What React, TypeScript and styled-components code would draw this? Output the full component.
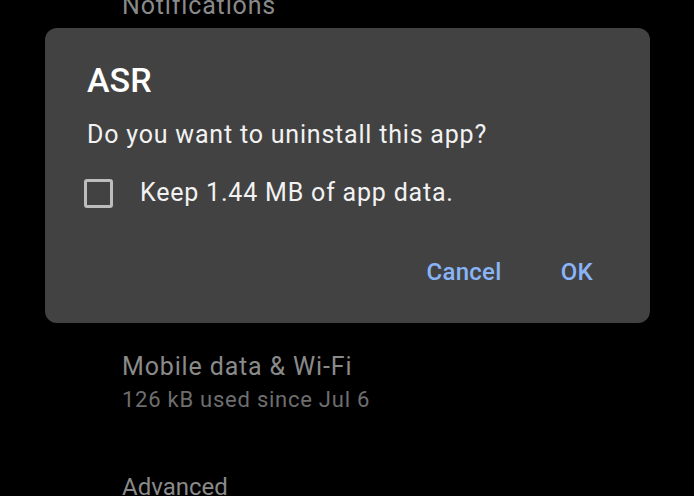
import React from "react";
import styled, { createGlobalStyle } from "styled-components";

const Global = createGlobalStyle`
  html, body { margin: 0; padding: 0; background: #000; }
  body { font-family: Roboto, "Noto Sans", sans-serif; }
  #root { width: 694px; height: 496px; overflow: hidden; position: relative; }
`;

const Screen = styled.div`
  position: relative;
  width: 694px;
  height: 496px;
  background: #000;
  overflow: hidden;
`;

const List = styled.div`
  display: flex;
  flex-direction: column;
  padding-left: 122px;
  margin-top: -8px;
`;

const ItemTitle = styled.div<{ $mt?: number; $tight?: boolean }>`
  font-size: ${(p) => (p.$tight ? 24 : 25)}px;
  line-height: 28px;
  letter-spacing: ${(p) => (p.$tight ? 0 : 0.85)}px;
  color: #8a8a8a;
  margin-top: ${(p) => p.$mt ?? 0}px;
  white-space: nowrap;
`;

const ItemSub = styled.div`
  font-size: 22px;
  line-height: 26px;
  letter-spacing: 0.75px;
  color: #6e6e6e;
  margin-top: 6px;
  white-space: nowrap;
`;

const Dialog = styled.div`
  position: absolute;
  left: 45px;
  top: 28px;
  width: 605px;
  height: 295px;
  box-sizing: border-box;
  background: #424242;
  border-radius: 12px;
  padding: 32px 57px 0 42px;
  display: flex;
  flex-direction: column;
`;

const Title = styled.div`
  font-size: 34px;
  line-height: 40px;
  font-weight: 500;
  color: #fff;
`;

const Message = styled.div`
  margin-top: 20px;
  font-size: 25px;
  line-height: 30px;
  letter-spacing: 0.8px;
  color: #f2f2f2;
`;

const CheckRow = styled.div`
  margin-top: 28px;
  display: flex;
  align-items: center;
  gap: 27px;
  margin-left: -3px;
`;

const Box = styled.div`
  width: 29px;
  height: 29px;
  box-sizing: border-box;
  border: 3px solid #bdbdbd;
  border-radius: 3px;
  flex: none;
`;

const CheckLabel = styled.div`
  font-size: 25px;
  line-height: 30px;
  letter-spacing: 0.8px;
  color: #f2f2f2;
`;

const Actions = styled.div`
  margin-top: auto;
  margin-bottom: 36px;
  display: flex;
  justify-content: flex-end;
  gap: 59px;
`;

const Action = styled.div`
  font-size: 24px;
  line-height: 30px;
  font-weight: 500;
  letter-spacing: 0.3px;
  color: #8ab4f8;
`;

export default function App() {
  return (
    <Screen>
      <Global />
      <List>
        <ItemTitle>Notifications</ItemTitle>
        <ItemTitle $mt={333}>Mobile data &amp; Wi-Fi</ItemTitle>
        <ItemSub>126 kB used since Jul 6</ItemSub>
        <ItemTitle $mt={60} $tight>Advanced</ItemTitle>
      </List>
      <Dialog>
        <Title>ASR</Title>
        <Message>Do you want to uninstall this app?</Message>
        <CheckRow>
          <Box />
          <CheckLabel>Keep 1.44 MB of app data.</CheckLabel>
        </CheckRow>
        <Actions>
          <Action>Cancel</Action>
          <Action>OK</Action>
        </Actions>
      </Dialog>
    </Screen>
  );
}
